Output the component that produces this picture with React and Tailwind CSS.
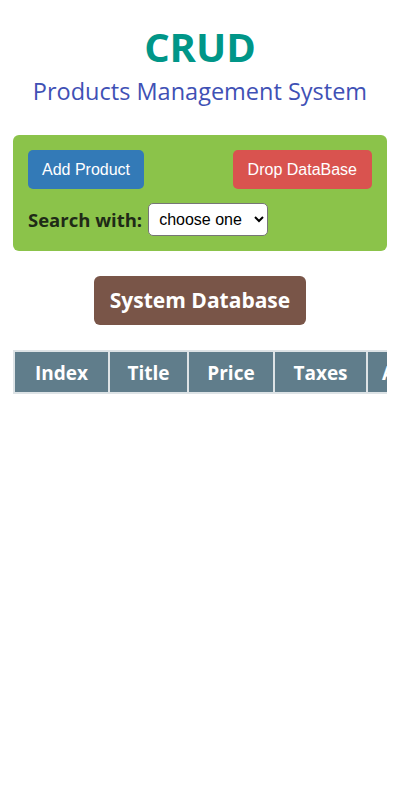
const columns = [
  { label: "Index", width: "min-w-[95px]" },
  { label: "Title", width: "min-w-[79px]" },
  { label: "Price", width: "min-w-[86px]" },
  { label: "Taxes", width: "min-w-[93px]" },
  { label: "Ads", width: "px-[14px]" },
  { label: "Discount", width: "px-[20px]" },
  { label: "Total", width: "px-[20px]" },
  { label: "Category", width: "px-[20px]" },
  { label: "Update", width: "px-[20px]" },
  { label: "Delete", width: "px-[20px]" },
];

const App = () => {
  return (
    <div className="min-h-[803px] bg-white px-[13px] pt-[27px] font-['Open_Sans',sans-serif]">
      {/* Header */}
      <div className="text-center">
        <h1 className="text-[40px] font-bold leading-[40px] text-[#009688]">CRUD</h1>
        <h2 className="mt-[8px] text-[23.5px] leading-[32px] text-[#3f51b5]">Products Management System</h2>
      </div>

      {/* Controls */}
      <div className="mt-[28px] rounded-[6px] bg-[#8bc34a] p-[15px]">
        <div className="flex items-center justify-between">
          <button className="h-[39px] rounded-[5px] bg-[#337ab7] px-[14px] font-['Liberation_Sans',sans-serif] text-[16px] text-white">
            Add Product
          </button>
          <button className="h-[39px] rounded-[5px] bg-[#d9534f] px-[15px] font-['Liberation_Sans',sans-serif] text-[16px] text-white">
            Drop DataBase
          </button>
        </div>
        <div className="mt-[14px] flex items-center gap-[6px]">
          <label className="text-[18.5px] font-bold text-[#1f2a17]">Search with:</label>
          <select className="h-[33px] w-[120px] rounded-[5px] border border-[#767676] bg-white px-[6px] font-['Liberation_Sans',sans-serif] text-[16px] text-black">
            <option>choose one</option>
            <option>Title</option>
            <option>Category</option>
          </select>
        </div>
      </div>

      {/* Database title */}
      <div className="mt-[25px] flex justify-center">
        <div className="h-[49px] rounded-[6px] bg-[#795548] px-[16px] text-[21px] font-bold leading-[49px] text-white">
          System Database
        </div>
      </div>

      {/* Table */}
      <div className="mt-[25px] overflow-hidden">
        <table className="w-max border-collapse">
          <thead>
            <tr className="bg-[#607d8b]">
              {columns.map((col) => (
                <th
                  key={col.label}
                  className={`${col.width} h-[42px] whitespace-nowrap border-2 border-[#dde3e6] pt-[3px] text-center text-[19px] font-bold text-white`}
                >
                  {col.label}
                </th>
              ))}
            </tr>
          </thead>
          <tbody></tbody>
        </table>
      </div>
    </div>
  );
};

export default App;
